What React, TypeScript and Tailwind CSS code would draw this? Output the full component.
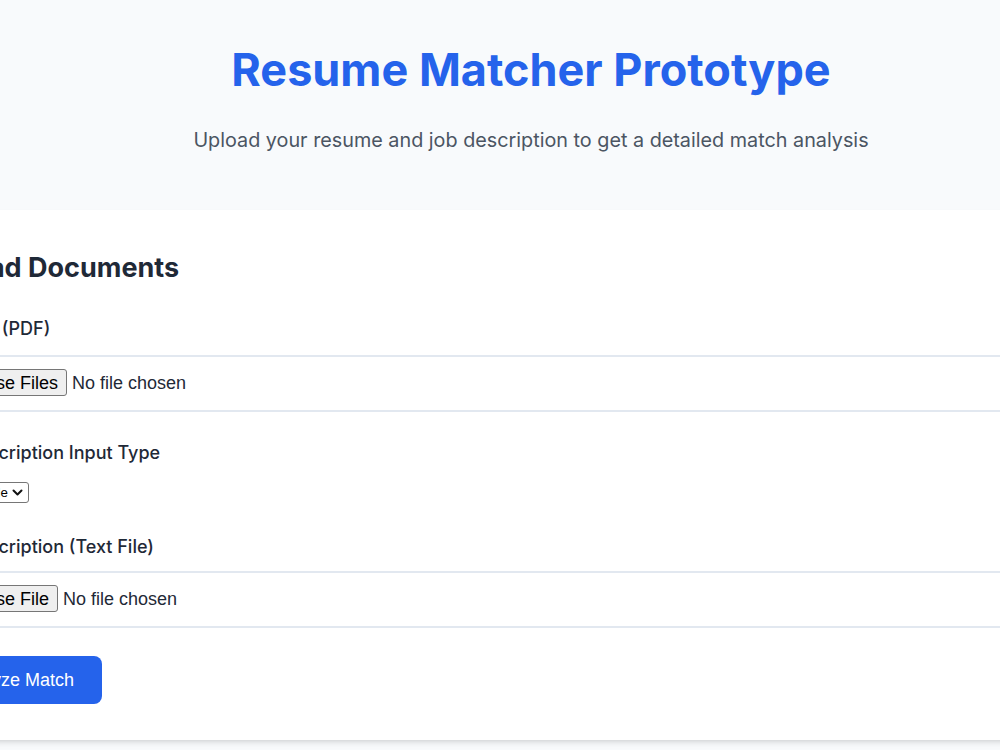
import React from "react";

function FileField({ buttonLabel }: { buttonLabel: string }) {
  return (
    <div className="flex items-center border-2 border-[#e2e8f0] rounded-lg pl-[14px] pt-3 pb-[14px] font-['Liberation_Sans',Arial,sans-serif] text-[18px] text-[#1f2937]">
      <button
        type="button"
        className="h-[27px] px-2 border border-[#767676] bg-[#efefef] rounded-[3px] text-black leading-none"
      >
        {buttonLabel}
      </button>
      <span className="ml-[5px] leading-none">No file chosen</span>
    </div>
  );
}

export default function App() {
  return (
    <div className="w-full h-[750px] overflow-hidden bg-[#f8fafc] font-['Inter',sans-serif]">
      <header className="h-[210px] flex flex-col items-center pl-[62px] pt-[46px]">
        <h1 className="text-[45px] leading-[48px] font-bold text-[#2563eb]">
          Resume Matcher Prototype
        </h1>
        <p className="mt-8 text-[19.8px] leading-7 text-[#4b5563]">
          Upload your resume and job description to get a detailed match analysis
        </p>
      </header>

      <main className="ml-[-104px] w-[1250px] bg-white shadow-md pt-[42px] px-8 pb-9">
        <h2 className="text-[27px] leading-8 font-bold text-[#1f2937] mb-[33px]">
          Upload Documents
        </h2>

        <label className="block text-[18px] leading-6 font-medium text-[#1f2937] mb-[14px]">
          Resume (PDF)
        </label>
        <FileField buttonLabel="Choose Files" />

        <label className="block text-[18px] leading-6 font-medium text-[#1f2937] mt-[29px] mb-[17px]">
          Job Description Input Type
        </label>
        <div className="w-[101px] h-[21px] flex items-center justify-end pr-[5px] border border-[#767676] rounded-[3px] bg-white font-['Liberation_Sans',Arial,sans-serif] text-[13.33px] text-black overflow-hidden">
          <span className="whitespace-nowrap">Upload File</span>
          <svg className="ml-1 shrink-0" width="11" height="7" viewBox="0 0 11 7" fill="none">
            <path d="M1.5 1.5l4 4 4-4" stroke="#111" strokeWidth="2" strokeLinecap="round" strokeLinejoin="round" />
          </svg>
        </div>

        <label className="block text-[18px] leading-6 font-medium text-[#1f2937] mt-8 mb-3">
          Job Description (Text File)
        </label>
        <FileField buttonLabel="Choose File" />

        <button
          type="button"
          className="mt-7 h-12 px-7 rounded-lg bg-[#2563eb] text-white text-[18px] font-['Liberation_Sans',Arial,sans-serif]"
        >
          Analyze Match
        </button>
      </main>
    </div>
  );
}
